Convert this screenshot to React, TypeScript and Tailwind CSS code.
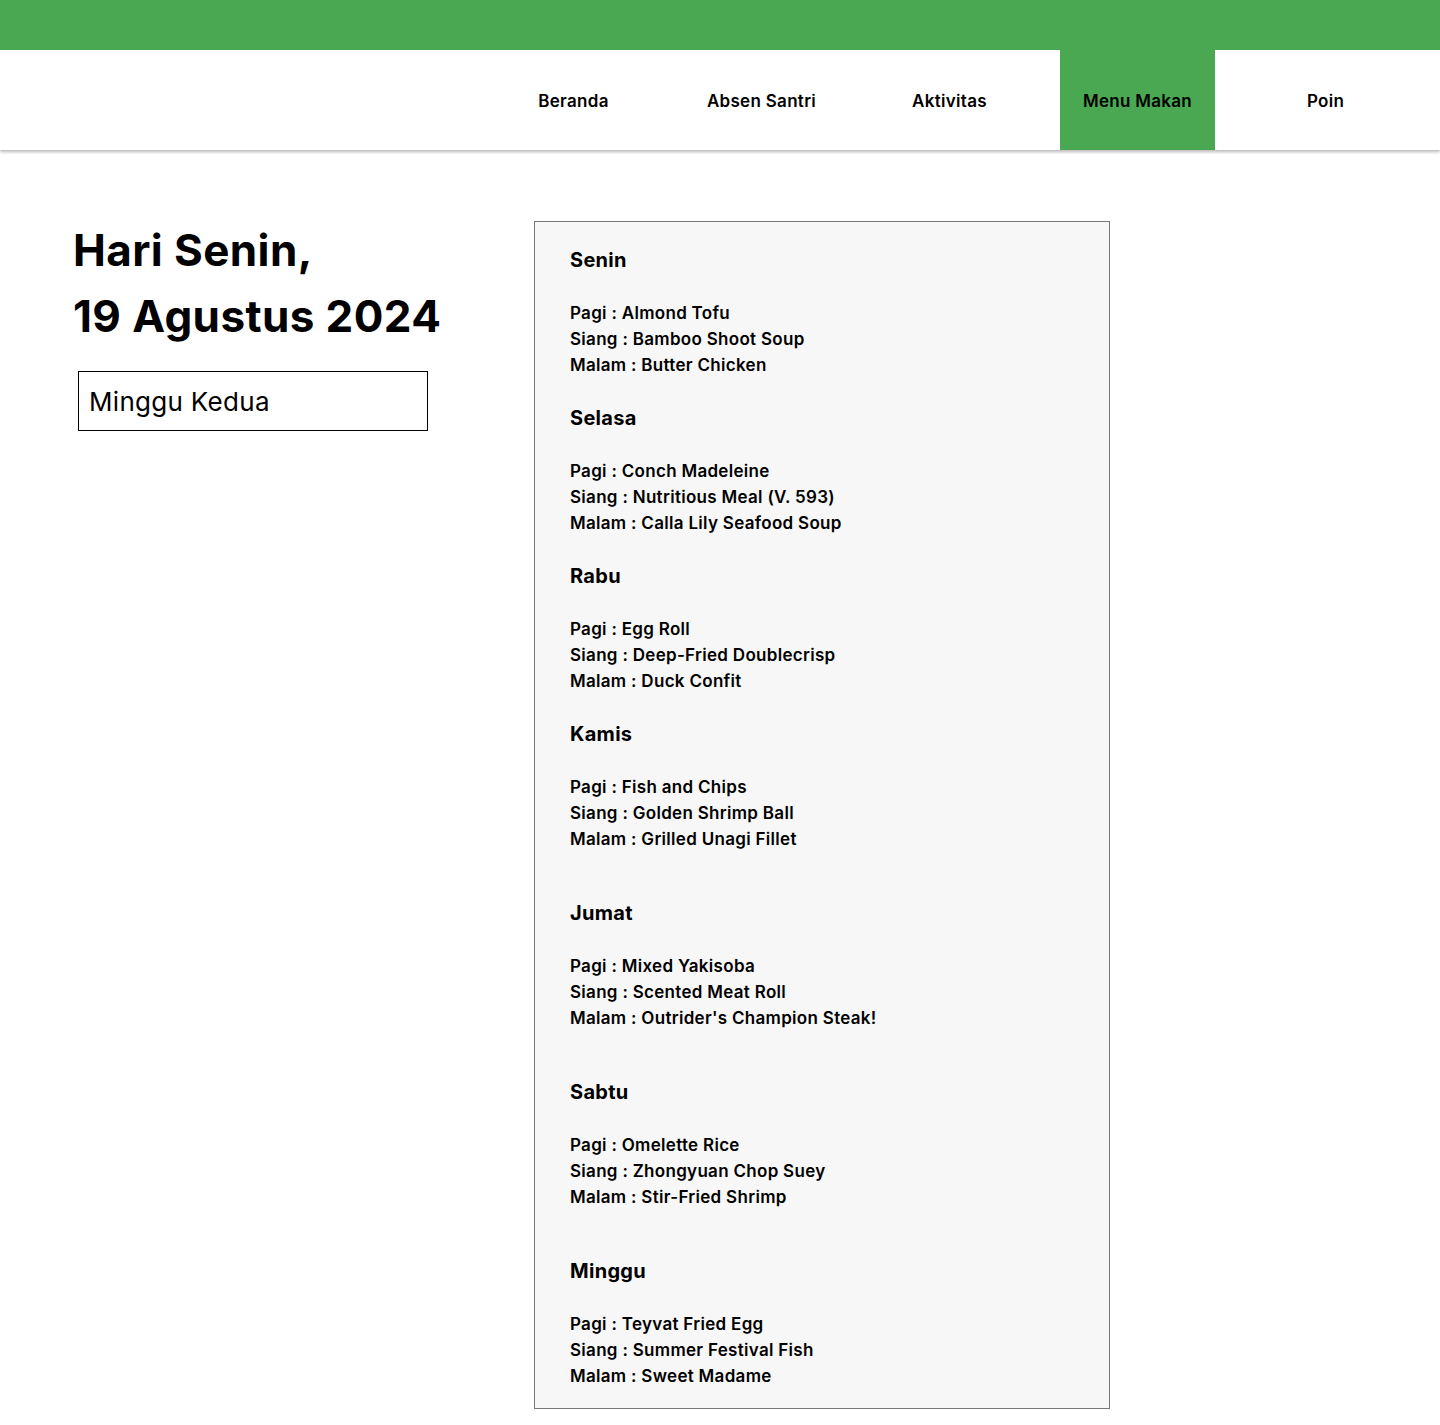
import React from "react";

type Day = {
  name: string;
  pagi: string;
  siang: string;
  malam: string;
  extra?: boolean;
};

const days: Day[] = [
  { name: "Senin", pagi: "Almond Tofu", siang: "Bamboo Shoot Soup", malam: "Butter Chicken" },
  { name: "Selasa", pagi: "Conch Madeleine", siang: "Nutritious Meal (V. 593)", malam: "Calla Lily Seafood Soup" },
  { name: "Rabu", pagi: "Egg Roll", siang: "Deep-Fried Doublecrisp", malam: "Duck Confit" },
  { name: "Kamis", pagi: "Fish and Chips", siang: "Golden Shrimp Ball", malam: "Grilled Unagi Fillet" },
  { name: "Jumat", pagi: "Mixed Yakisoba", siang: "Scented Meat Roll", malam: "Outrider's Champion Steak!", extra: true },
  { name: "Sabtu", pagi: "Omelette Rice", siang: "Zhongyuan Chop Suey", malam: "Stir-Fried Shrimp", extra: true },
  { name: "Minggu", pagi: "Teyvat Fried Egg", siang: "Summer Festival Fish", malam: "Sweet Madame", extra: true },
];

const navItems = ["Beranda", "Absen Santri", "Aktivitas", "Menu Makan", "Poin"];

const App = () => {
  return (
    <div className="min-h-[1425px] bg-white font-['Inter','Noto_Sans',sans-serif] text-black">
      <div className="h-[50px] bg-[#4aa853]" />
      <nav className="relative z-10 flex h-[100px] justify-end gap-[33px] bg-white pr-[37px] shadow-[0_2px_3px_rgba(0,0,0,0.28)]">
        {navItems.map((item) => (
          <a
            key={item}
            href="#"
            className={`flex w-[155px] items-center justify-center pt-[3px] text-[17px] font-semibold tracking-[0.3px] ${
              item === "Menu Makan" ? "bg-[#4aa853]" : ""
            }`}
          >
            {item}
          </a>
        ))}
      </nav>

      <main className="flex items-start pb-[16px] pl-[73px] pt-[67px]">
        <div className="w-[461px]">
          <h1 className="text-[44px] font-bold leading-[66px] tracking-[0.4px]">
            Hari Senin,
            <br />
            19 Agustus 2024
          </h1>
          <div className="ml-[5px] mt-[22px] flex h-[60px] w-[350px] items-center border border-black px-[10px] text-[26px] tracking-[0.3px]">
            Minggu Kedua
          </div>
        </div>

        <div className="mt-[4px] w-[576px] border border-[#777] bg-[#f7f7f7] pb-[19px] pl-[35px] pt-[23px]">
          {days.map((day, i) => (
            <div key={day.name} className={i === 0 ? "" : day.extra ? "mt-[46px]" : "mt-[25px]"}>
              <h3 className="text-[20px] font-bold leading-[30px] tracking-[0.3px]">{day.name}</h3>
              <div className="mt-[25px] text-[17px] font-semibold leading-[26px] tracking-[0.3px]">
                <p>Pagi : {day.pagi}</p>
                <p>Siang : {day.siang}</p>
                <p>Malam : {day.malam}</p>
              </div>
            </div>
          ))}
        </div>
      </main>
    </div>
  );
};

export default App;
